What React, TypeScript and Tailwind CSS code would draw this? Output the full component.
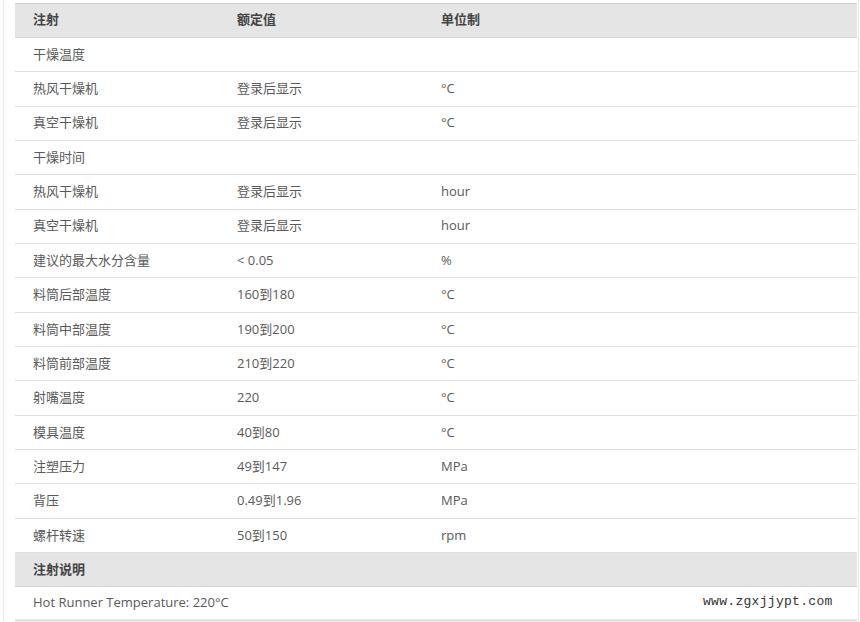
const rows: { name: string; value?: string; unit?: string; group?: boolean }[] = [
  { name: "干燥温度", group: true },
  { name: "热风干燥机", value: "登录后显示", unit: "°C" },
  { name: "真空干燥机", value: "登录后显示", unit: "°C" },
  { name: "干燥时间", group: true },
  { name: "热风干燥机", value: "登录后显示", unit: "hour" },
  { name: "真空干燥机", value: "登录后显示", unit: "hour" },
  { name: "建议的最大水分含量", value: "< 0.05", unit: "%" },
  { name: "料筒后部温度", value: "160到180", unit: "°C" },
  { name: "料筒中部温度", value: "190到200", unit: "°C" },
  { name: "料筒前部温度", value: "210到220", unit: "°C" },
  { name: "射嘴温度", value: "220", unit: "°C" },
  { name: "模具温度", value: "40到80", unit: "°C" },
  { name: "注塑压力", value: "49到147", unit: "MPa" },
  { name: "背压", value: "0.49到1.96", unit: "MPa" },
  { name: "螺杆转速", value: "50到150", unit: "rpm" },
];

const font = { fontFamily: '"Open Sans", "Noto Sans CJK SC", sans-serif' };

const HeadRow = ({ cells }: { cells: string[] }) => (
  <div className="flex h-[34.35px] items-center border-b border-[#d6d6d6] bg-[#e5e5e5] text-[13px] font-bold text-[#444]">
    {cells.map((c, i) => (
      <div
        key={i}
        className={i < 2 ? "w-[204px] shrink-0 pl-[18px]" : "flex-1 pl-[18px]"}
      >
        {c}
      </div>
    ))}
  </div>
);

export default function App() {
  return (
    <div className="relative h-[622px] w-[860px] overflow-hidden bg-white" style={font}>
      <div className="ml-[3px] h-full w-[856px] border-x border-[#e8e8e8] pl-[11px] pr-px pt-[2.5px]">
        <div className="border-t border-[#cfcfcf]">
          <HeadRow cells={["注射", "额定值", "单位制"]} />
          {rows.map((r, i) => (
            <div
              key={i}
              className="flex h-[34.35px] items-center border-b border-[#e0e0e0] text-[13px] text-[#5a5a5a]"
            >
              <div className="w-[204px] shrink-0 pl-[18px]">{r.name}</div>
              <div className="w-[204px] shrink-0 pl-[18px]">{r.value}</div>
              <div className="flex-1 pl-[18px]">{r.unit}</div>
            </div>
          ))}
          <HeadRow cells={["注射说明"]} />
          <div className="flex h-[34.35px] items-center border-b-[3px] border-[#e5e5e5] pl-[18px] text-[13px] text-[#5a5a5a]">
            Hot Runner Temperature: 220°C
          </div>
        </div>
      </div>
      <div
        className="absolute left-[703px] top-[592px] text-[13px] tracking-[0.3px] text-[#333]"
        style={{ fontFamily: '"Liberation Mono", monospace' }}
      >
        www.zgxjjypt.com
      </div>
    </div>
  );
}
